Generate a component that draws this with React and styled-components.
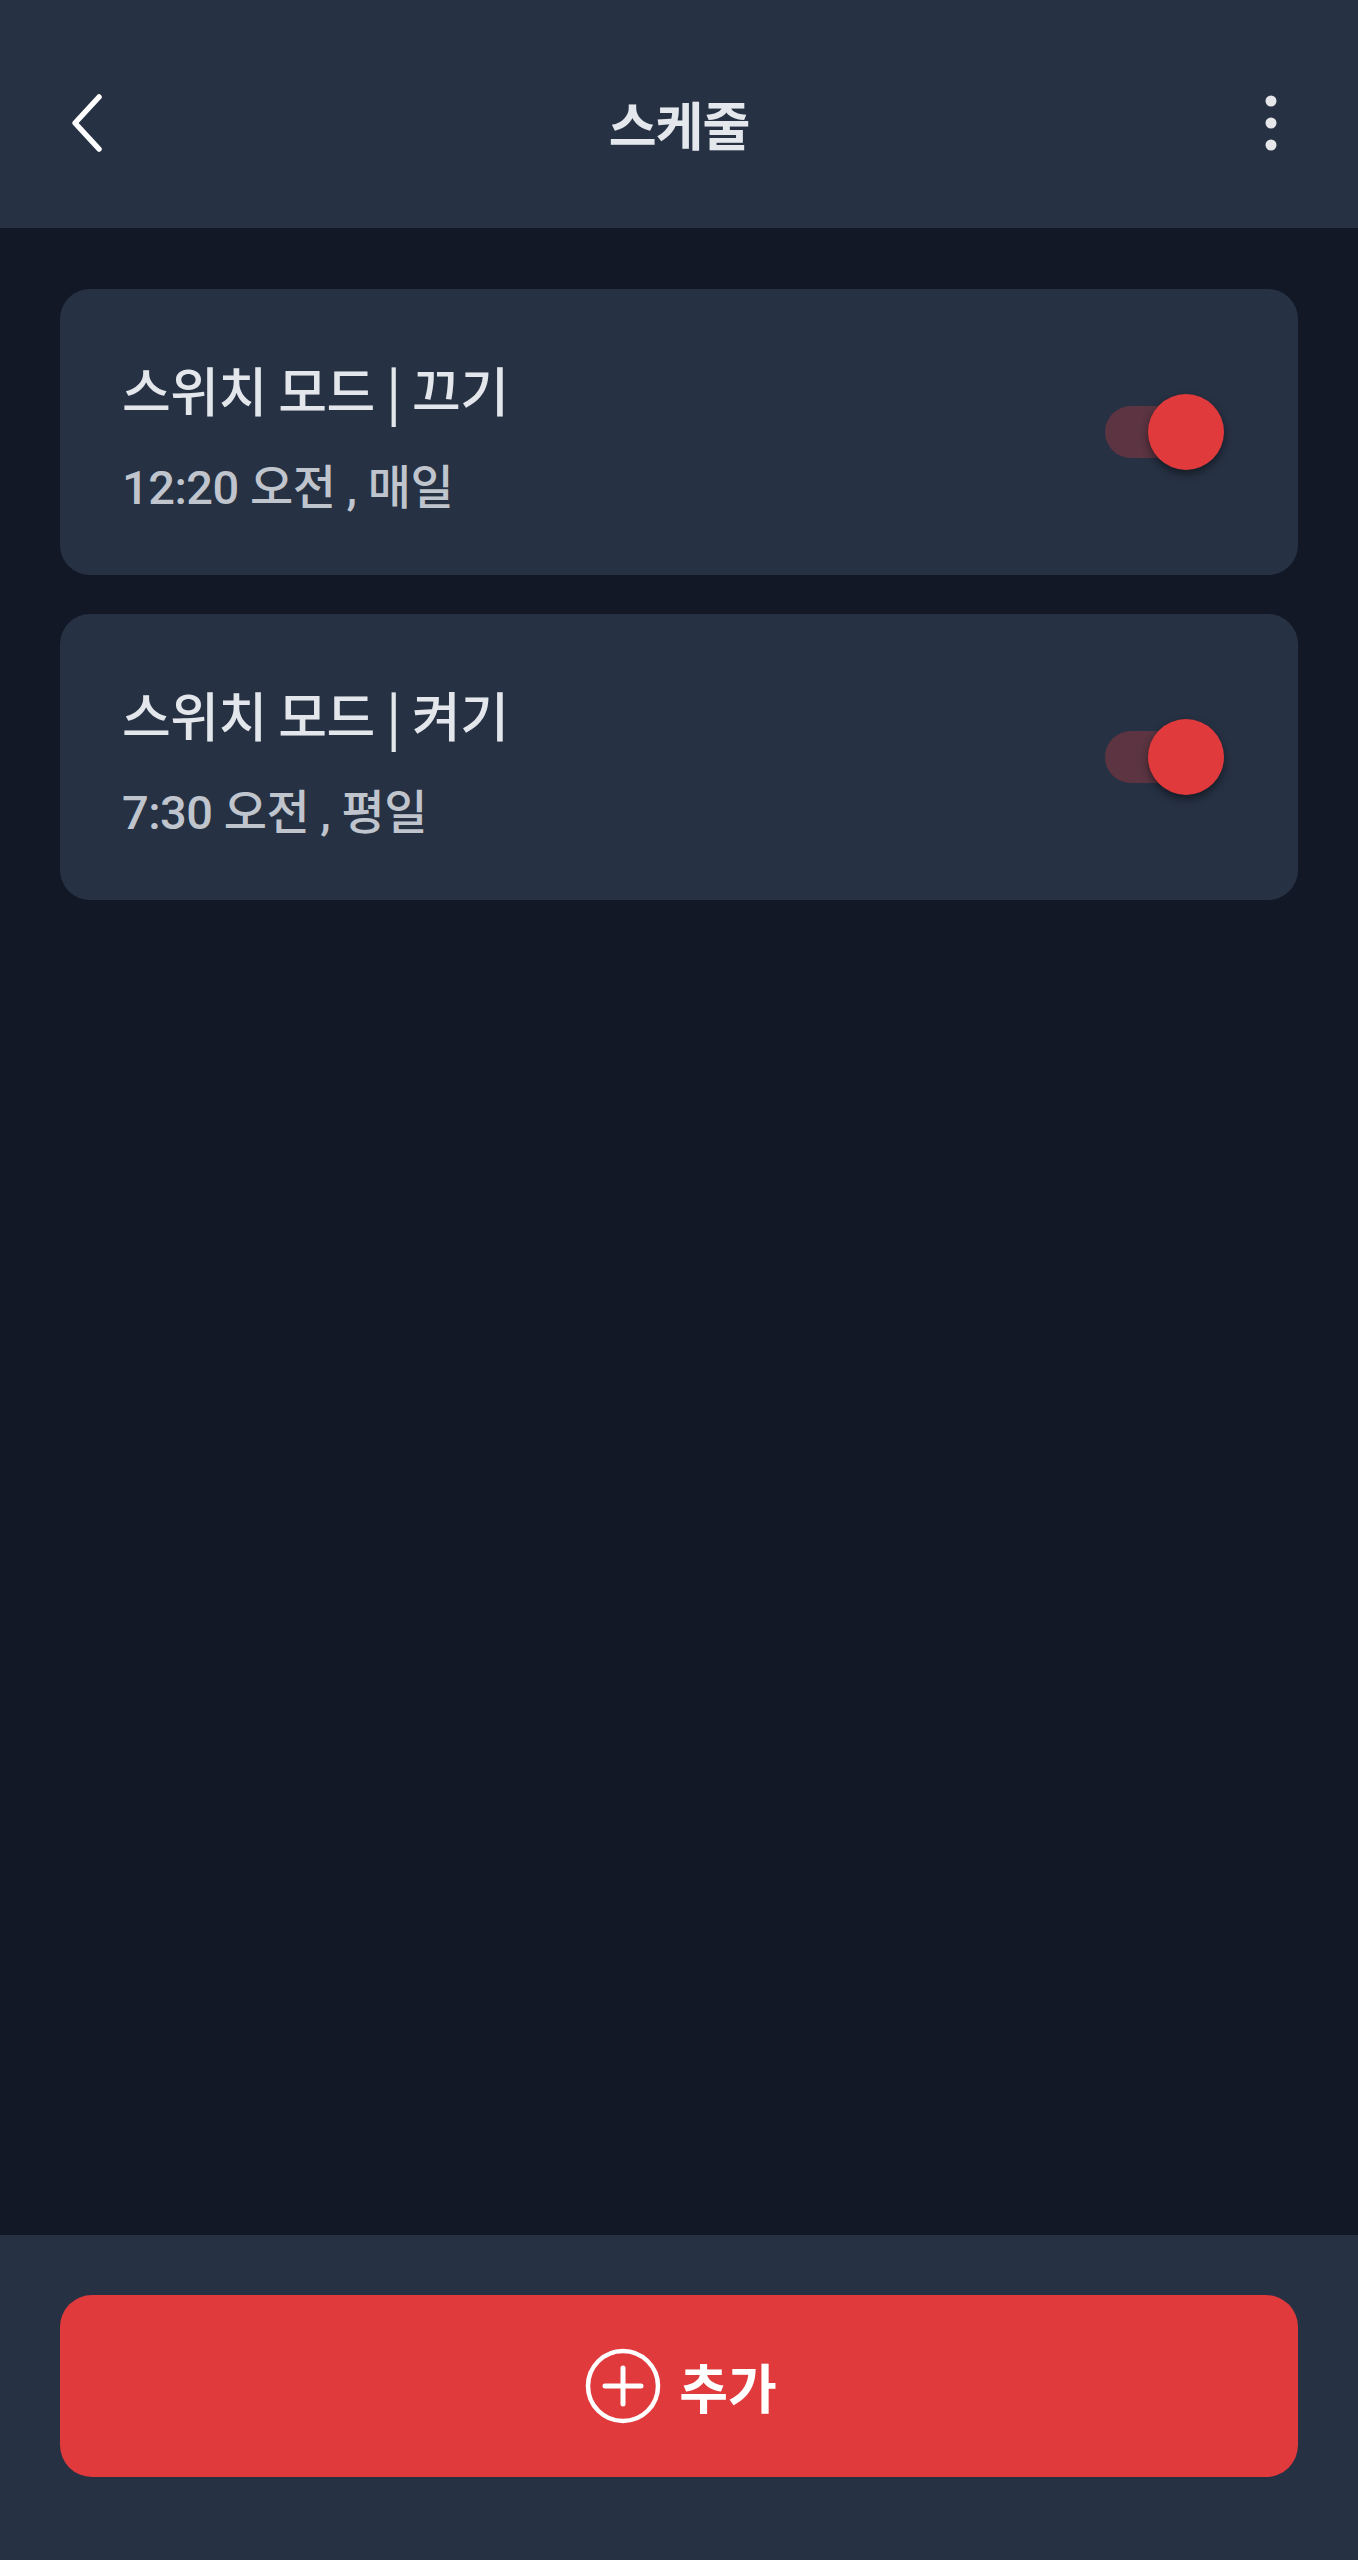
import React, { useState } from "react";
import styled, { createGlobalStyle } from "styled-components";

const Global = createGlobalStyle`
  html, body { margin: 0; padding: 0; background: #121826; }
  body { font-family: "Roboto", "Noto Sans CJK KR", sans-serif; }
  * { box-sizing: border-box; }
`;

const Page = styled.div`
  width: 1358px;
  min-height: 2560px;
  display: flex;
  flex-direction: column;
  background: #121826;
`;

const Header = styled.header`
  height: 228px;
  background: #263244;
  display: grid;
  grid-template-columns: 160px 1fr 160px;
  align-items: center;
  padding: 18px 0 0 0;
`;

const IconButton = styled.button`
  background: none;
  border: none;
  padding: 0 0 0 ${(p) => p.$pad || 0}px;
  display: flex;
  align-items: center;
  justify-content: flex-start;
  height: 80px;
  color: #ffffff;
  cursor: pointer;
`;

const HeaderTitle = styled.h1`
  margin: 0;
  text-align: center;
  font-size: 52px;
  font-weight: 600;
  color: #e4e7ec;
  letter-spacing: -1px;
`;

const Main = styled.main`
  flex: 1;
  display: flex;
  flex-direction: column;
  gap: 39px;
  padding: 61px 60px;
`;

const Card = styled.div`
  height: 286px;
  background: #263143;
  border-radius: 30px;
  display: flex;
  align-items: center;
  justify-content: space-between;
  padding: 0 74px 0 62px;
`;

const TextCol = styled.div`
  display: flex;
  flex-direction: column;
  gap: 38px;
  margin-top: 10px;
`;

const CardTitle = styled.div`
  font-family: "Noto Sans CJK KR", "Roboto", sans-serif;
  font-size: 53px;
  font-weight: 500;
  color: #e3e6eb;
  line-height: 1.2;
  letter-spacing: -0.5px;
`;

const CardSub = styled.div`
  font-size: 47px;
  font-weight: 500;
  color: #bfc4cd;
  line-height: 1.2;
  letter-spacing: -0.5px;
`;

const SwitchWrap = styled.button`
  position: relative;
  width: 119px;
  height: 76px;
  border: none;
  background: none;
  padding: 0;
  cursor: pointer;
`;

const Track = styled.span`
  position: absolute;
  left: 0;
  top: 12px;
  width: 108px;
  height: 52px;
  border-radius: 26px;
  background: ${(p) => (p.$on ? "#5c3442" : "#4b5563")};
`;

const Thumb = styled.span`
  position: absolute;
  top: 0;
  left: ${(p) => (p.$on ? "43px" : "0px")};
  width: 76px;
  height: 76px;
  border-radius: 50%;
  background: ${(p) => (p.$on ? "#e03a3c" : "#d1d5db")};
  box-shadow: 0 4px 8px rgba(0, 0, 0, 0.45);
`;

const Footer = styled.footer`
  height: 325px;
  background: #263143;
  padding: 60px 60px 0;
`;

const AddButton = styled.button`
  width: 100%;
  height: 182px;
  border: none;
  border-radius: 32px;
  background: #e03a3c;
  display: flex;
  align-items: center;
  justify-content: center;
  gap: 18px;
  color: #ffffff;
  font-family: "Roboto", "Noto Sans CJK KR", sans-serif;
  font-size: 53px;
  font-weight: 600;
  cursor: pointer;
  padding: 0 0 0 4px;
`;

function Toggle({ on, onClick }) {
  return (
    <SwitchWrap onClick={onClick} aria-pressed={on}>
      <Track $on={on} />
      <Thumb $on={on} />
    </SwitchWrap>
  );
}

const schedules = [
  { title: "스위치 모드 | 끄기", sub: "12:20 오전 , 매일" },
  { title: "스위치 모드 | 켜기", sub: "7:30 오전 , 평일" },
];

export default function App() {
  const [states, setStates] = useState([true, true]);
  return (
    <>
      <Global />
      <Page>
        <Header>
          <IconButton $pad={70}>
            <svg width="36" height="60" viewBox="0 0 36 60" fill="none">
              <path d="M29 4 L5 30 L29 56" stroke="#fff" strokeWidth="5.5" strokeLinecap="round" strokeLinejoin="round" />
            </svg>
          </IconButton>
          <HeaderTitle>스케줄</HeaderTitle>
          <IconButton $pad={66}>
            <svg width="14" height="60" viewBox="0 0 14 60" fill="#e5e7eb">
              <circle cx="7" cy="8" r="5.5" />
              <circle cx="7" cy="30" r="5.5" />
              <circle cx="7" cy="52" r="5.5" />
            </svg>
          </IconButton>
        </Header>
        <Main>
          {schedules.map((s, i) => (
            <Card key={i}>
              <TextCol>
                <CardTitle>{s.title}</CardTitle>
                <CardSub>{s.sub}</CardSub>
              </TextCol>
              <Toggle
                on={states[i]}
                onClick={() => setStates(states.map((v, j) => (j === i ? !v : v)))}
              />
            </Card>
          ))}
        </Main>
        <Footer>
          <AddButton>
            <svg width="76" height="76" viewBox="0 0 76 76" fill="none">
              <circle cx="38" cy="38" r="35" stroke="#fff" strokeWidth="4.5" />
              <path d="M38 20 V56 M20 38 H56" stroke="#fff" strokeWidth="5" strokeLinecap="round" />
            </svg>
            추가
          </AddButton>
        </Footer>
      </Page>
    </>
  );
}
